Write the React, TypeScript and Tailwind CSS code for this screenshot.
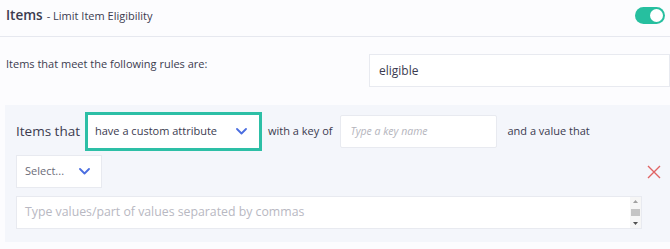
const Chevron = () => (
    <svg width="11" height="7" viewBox="0 0 11 7" fill="none">
        <path d="M1 1l4.5 4.5L10 1" stroke="#4b6ee0" strokeWidth="1.8" strokeLinecap="round" strokeLinejoin="round" />
    </svg>
);

export default function App() {
    return (
        <div className="h-[249px] w-[670px] overflow-hidden bg-[#fcfcfe] font-['Open_Sans',sans-serif] text-[#3b3b4f]">
            <div className="flex h-[37px] items-center justify-between border-b border-[#e6e8ef] pl-[6px] pr-[5px]">
                <p className="mb-[5px] flex items-baseline">
                    <span className="text-[13.5px] font-semibold">Items</span>
                    <span className="ml-[4px] text-[11px]">- Limit Item Eligibility</span>
                </p>
                <div className="mb-[5px] flex h-[17px] w-[30px] items-center justify-end rounded-full bg-[#26bf9f] pr-[2px]">
                    <div className="h-[13px] w-[13px] rounded-full bg-white" />
                </div>
            </div>

            <div className="flex h-[68px] pl-[6px]">
                <p className="mt-[19px] w-[363px] text-[11px]">Items that meet the following rules are:</p>
                <div className="mt-[17px] flex h-[33px] flex-1 items-center border border-[#e8eaf0] bg-white pl-[9px] text-[12px]">
                    eligible
                </div>
            </div>

            <div className="ml-[5px] flex h-[137px] flex-col bg-[#f4f6fb] pl-[11px] pr-[9px] pt-[7px]">
                <div className="flex items-center">
                    <span className="mr-[5px] text-[13.5px]">Items that</span>
                    <div className="flex h-[39px] w-[177px] items-center justify-between border-[3px] border-[#2dbfa6] bg-white pl-[7px] pr-[12px] text-[11px]">
                        have a custom attribute
                        <Chevron />
                    </div>
                    <span className="ml-[6px] text-[11px]">with a key of</span>
                    <div className="ml-[8px] flex h-[33px] w-[157px] items-center rounded-[2px] border border-[#e8eaf0] bg-white pl-[9px] text-[10.5px] italic text-[#b4b4bc]">
                        Type a key name
                    </div>
                    <span className="ml-[10px] text-[11px]">and a value that</span>
                </div>
                <div className="mt-[4px] flex items-center justify-between">
                    <div className="flex h-[33px] w-[86px] items-center justify-between border border-[#e8eaf0] bg-white pl-[8px] pr-[11px] text-[11px] text-[#6b6b78]">
                        Select...
                        <Chevron />
                    </div>
                    <svg width="14" height="14" viewBox="0 0 14 14">
                        <path d="M1 1l12 12M13 1L1 13" stroke="#e06464" strokeWidth="1.4" />
                    </svg>
                </div>
                <div className="mt-[8px] flex h-[33px] w-[626px] border border-[#e8eaf0] bg-white">
                    <div className="flex flex-1 items-center pl-[8px] text-[12.3px] text-[#b8b8c2]">
                        Type values/part of values separated by commas
                    </div>
                    <div className="flex w-[11px] flex-col items-center justify-between bg-[#f6f6f6] py-[3px]">
                        <svg width="5" height="3" viewBox="0 0 5 3"><path d="M0 3h5L2.5 0z" fill="#a0a0a0" /></svg>
                        <div className="h-[7px] w-[9px] bg-[#c4c4c4]" />
                        <svg width="5" height="3" viewBox="0 0 5 3"><path d="M0 0h5L2.5 3z" fill="#505050" /></svg>
                    </div>
                </div>
            </div>
        </div>
    );
}
